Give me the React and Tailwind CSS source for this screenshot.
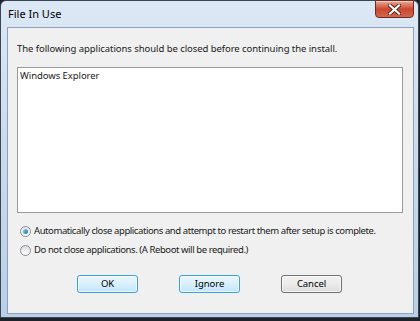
export default function App() {
    const font = { fontFamily: '"Noto Sans", "Open Sans", sans-serif' };

    return (
        <div className="w-[420px] h-[321px] bg-[#1e2228] overflow-hidden" style={font}>
            <div className="relative w-[419px] h-[318px] rounded-t-[6px] border border-[#3b4653] bg-gradient-to-b from-[#dce8f5] via-[#c9daee] to-[#b9cfe8] flex flex-col">
                <div className="h-[26px] flex items-center pl-[7px] text-[11px] text-black">
                    File In Use
                </div>

                <div className="absolute top-[-1px] right-[4px] w-[39px] h-[18px] rounded-b-[4px] border border-[#6e2a22] bg-gradient-to-b from-[#e9a894] via-[#c9482f] to-[#d4654c] flex items-center justify-center shadow-[inset_0_1px_0_rgba(255,255,255,0.5)]">
                    <svg width="13" height="11" viewBox="0 0 13 11">
                        <path d="M2 1.5 L11 9.5 M11 1.5 L2 9.5" stroke="#5b2118" strokeWidth="4" strokeLinecap="square" />
                        <path d="M2 1.5 L11 9.5 M11 1.5 L2 9.5" stroke="#ffffff" strokeWidth="2.2" strokeLinecap="square" />
                    </svg>
                </div>

                <div className="ml-[6px] mr-[4px] h-[287px] border border-[#8ea1b8] bg-[#f0f0f0] flex flex-col px-[9px] text-[9.5px] tracking-[-0.06px] text-[#1a1a1a] whitespace-nowrap">
                    <div className="h-[39px] flex items-center pt-[3px]">
                        The following applications should be closed before continuing the install.
                    </div>

                    <div className="w-[386px] h-[146px] border border-[#9a9a9a] bg-white px-[2px] pt-[1px]">
                        Windows Explorer
                    </div>

                    <div className="mt-[12px] flex flex-col gap-[6px] pl-[3px] tracking-[-0.42px]">
                        <label className="flex items-center gap-[3px] h-[13px]">
                            <span className="shrink-0 w-[11px] h-[11px] rounded-full border border-[#8a8f96] bg-gradient-to-b from-[#e6e6e6] to-[#ffffff] flex items-center justify-center">
                                <span className="w-[5px] h-[5px] rounded-full bg-gradient-to-br from-[#7fd3f3] to-[#1b6fa6]" />
                            </span>
                            Automatically close applications and attempt to restart them after setup is complete.
                        </label>
                        <label className="flex items-center gap-[3px] h-[13px]">
                            <span className="shrink-0 w-[11px] h-[11px] rounded-full border border-[#8a8f96] bg-gradient-to-b from-[#dcdcdc] to-[#ffffff]" />
                            Do not close applications. (A Reboot will be required.)
                        </label>
                    </div>

                    <div className="mt-[18px] flex pl-[60px] gap-[41px]">
                        <button className="w-[61px] h-[18px] rounded-[3px] border border-[#3c9fd6] bg-gradient-to-b from-[#eaf6fd] via-[#d9f0fc] to-[#bee6fd] text-[9.5px] text-black shadow-[inset_0_0_0_1px_rgba(255,255,255,0.7)]">
                            OK
                        </button>
                        <button className="w-[61px] h-[18px] rounded-[3px] border border-[#3c9fd6] bg-gradient-to-b from-[#eaf6fd] via-[#d9f0fc] to-[#bee6fd] text-[9.5px] text-black shadow-[inset_0_0_0_1px_rgba(255,255,255,0.7)]">
                            Ignore
                        </button>
                        <button className="w-[61px] h-[18px] rounded-[3px] border border-[#707070] bg-gradient-to-b from-[#f2f2f2] via-[#ebebeb] to-[#dddddd] text-[9.5px] text-black shadow-[inset_0_0_0_1px_rgba(255,255,255,0.7)]">
                            Cancel
                        </button>
                    </div>
                </div>
            </div>
        </div>
    );
}
